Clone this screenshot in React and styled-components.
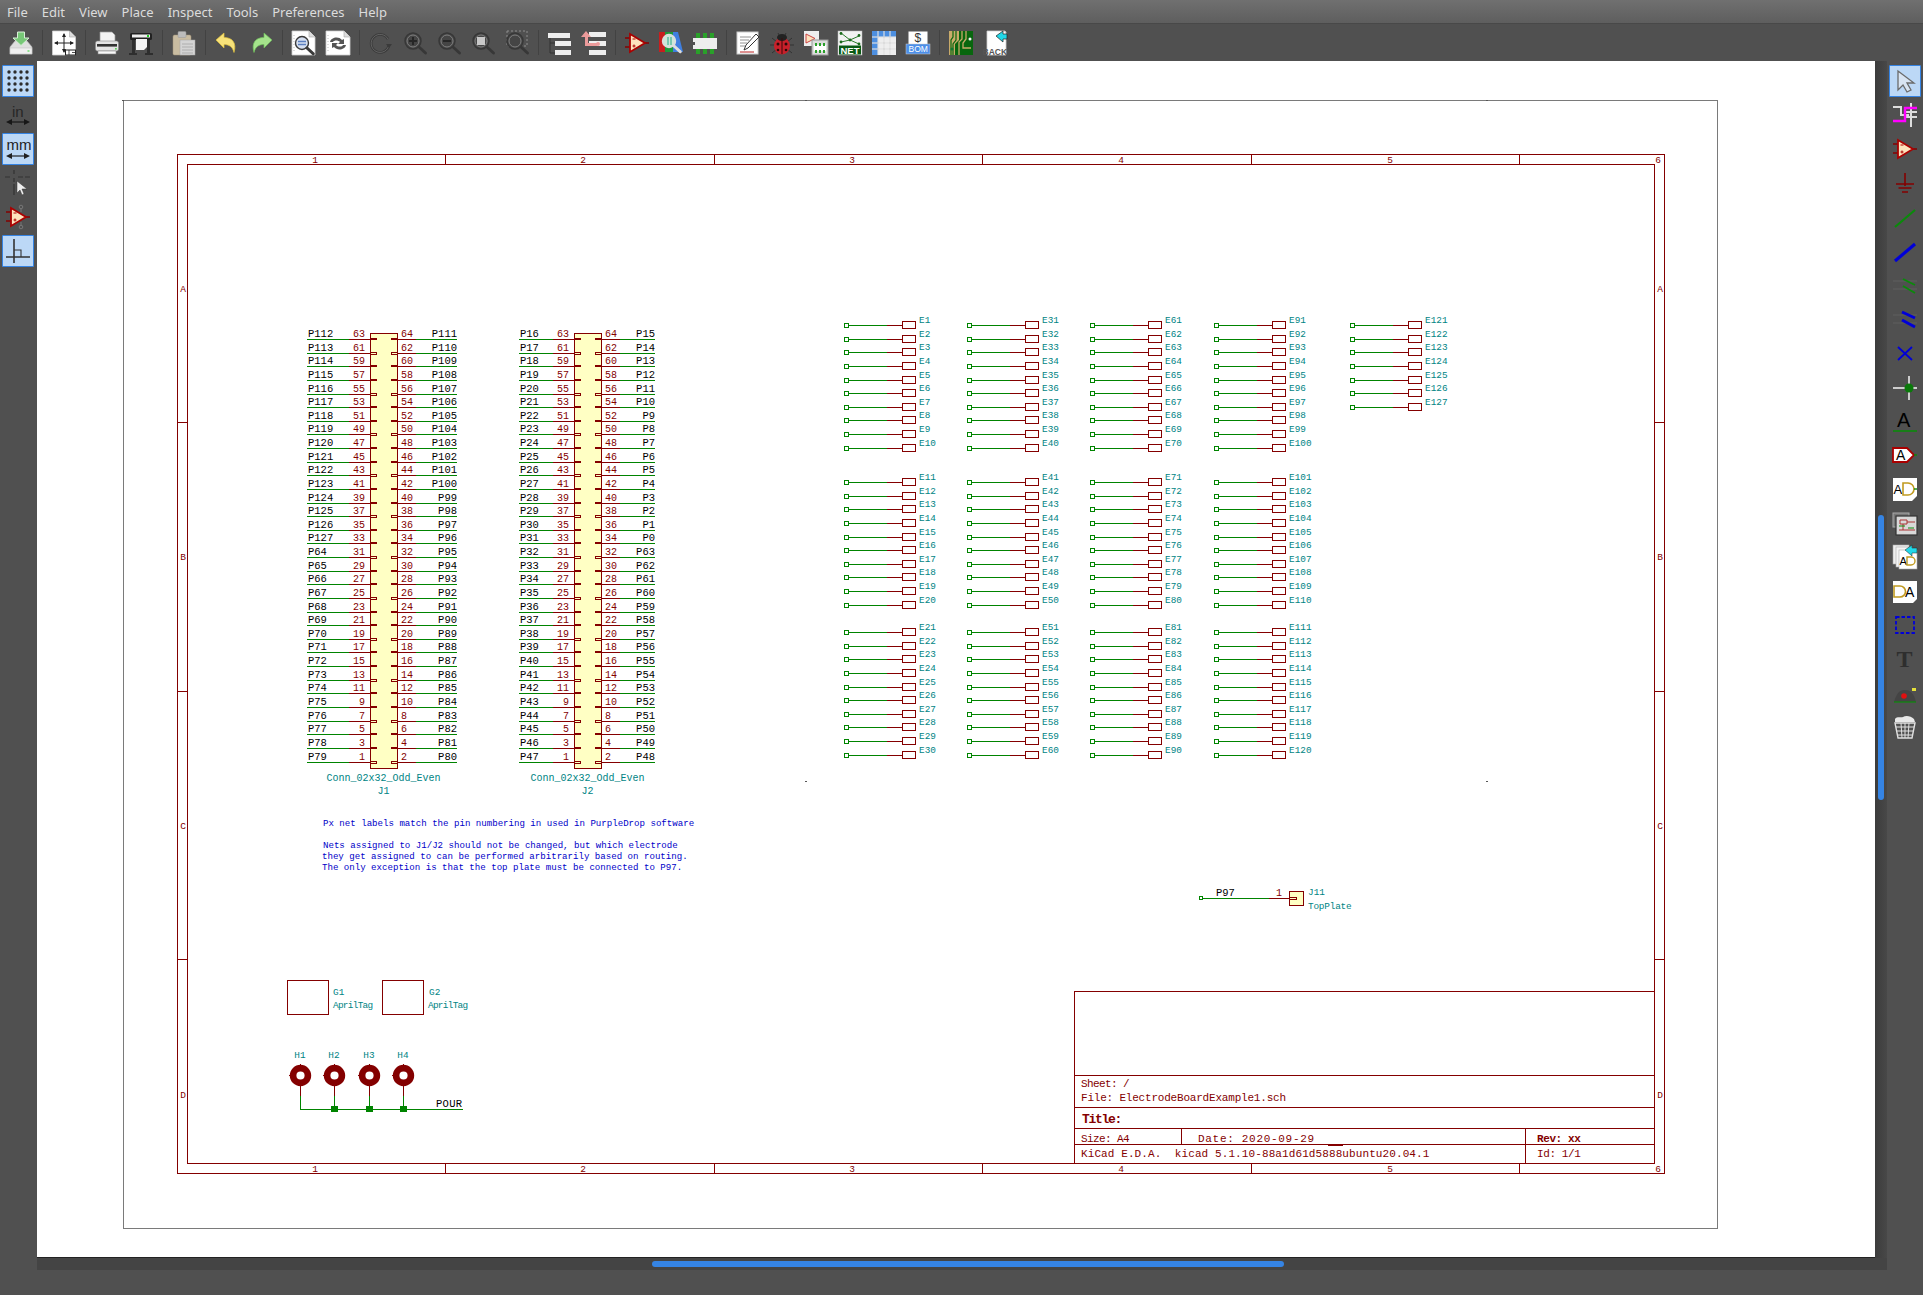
import React from 'react'
import styled, { createGlobalStyle } from 'styled-components'

const GlobalStyle = createGlobalStyle`
  html, body { margin: 0; padding: 0; background: #505050; }
`

const RED = '#840000'
const GREEN = '#008400'
const TEAL = '#008484'

// ---- window chrome ----
const Window = styled.div`
  width: 1923px;
  height: 1295px;
  display: flex;
  flex-direction: column;
  background: #505050;
  overflow: hidden;
  font-family: "Noto Sans", "Open Sans", sans-serif;
`
const MenuBar = styled.div`
  height: 23px;
  display: flex;
  align-items: center;
  gap: 14px;
  padding-left: 7px;
  background: linear-gradient(#707070, #5e5e5e);
  border-bottom: 1px solid #484848;
`
const MenuItem = styled.span`
  font-size: 13px;
  line-height: 20px;
  color: #dcdcdc;
`
const TopToolbar = styled.div`
  height: 37px;
  display: flex;
  align-items: center;
  padding-left: 4px;
  background: #505050;
`
const Sep = styled.span`
  width: 1px;
  height: 25px;
  margin: 0 4px;
  background: #424242;
`
const ToolButton = styled.div`
  width: ${p => p.$wide ? 34 : 32}px;
  height: ${p => p.$wide ? 34 : 32}px;
  box-sizing: border-box;
  flex: none;
  display: flex;
  align-items: center;
  justify-content: center;
  border-radius: 1px;
  border: 1px solid ${p => p.$active ? '#3584e4' : 'transparent'};
  background: ${p => p.$active ? '#bcd8f6' : 'transparent'};
`
const Main = styled.div`
  height: 1209px;
  display: flex;
`
const SideToolbar = styled.div`
  width: ${p => p.$w}px;
  flex: none;
  box-sizing: border-box;
  padding: 4px 2px 0;
  display: flex;
  flex-direction: column;
  gap: 2px;
`
const Center = styled.div`
  width: 1850px;
  display: flex;
  flex-direction: column;
`
const CanvasRow = styled.div`
  height: 1197px;
  display: flex;
`
const Sheet = styled.svg`
  display: block;
  width: 1838px;
  height: 1197px;
  background: #fff;
  border-bottom: 1px solid #222;
  box-sizing: border-box;
`
const VScroll = styled.div`
  width: 12px;
  background: linear-gradient(90deg, #3c3c3c, #484848);
  padding: 454px 3px 0;
  box-sizing: border-box;
`
const VThumb = styled.div`
  width: 6px;
  height: 285px;
  background: #3584e4;
  border-radius: 3px;
`
const HScroll = styled.div`
  height: 12px;
  background: #444;
  padding: 3px 0 0 615px;
  box-sizing: border-box;
`
const HThumb = styled.div`
  width: 632px;
  height: 6px;
  background: #3584e4;
  border-radius: 3px;
`
const BottomBar = styled.div`
  height: 25px;
  background: #505050;
`

// ---- icons ----
const Svg = styled.svg.attrs({ viewBox: '0 0 26 26' })`
  width: 26px;
  height: 26px;
  display: block;
  opacity: ${p => p.$dim || 1};
`
const IconLabel = styled.text`
  font-family: ${p => p.$serif ? '"Liberation Serif"' : '"Liberation Sans"'};
  font-size: ${p => p.$size}px;
  font-weight: ${p => p.$bold ? 700 : 400};
  fill: ${p => p.$fill || '#000'};
`

const Doc = ({ x = 4, y = 1, w = 18, h = 24, fold = 6 }) => (
  <g>
    <path d={`M${x} ${y}h${w - fold}l${fold} ${fold}v${h - fold}h-${w}z`} fill="#fff" stroke="#cfcfcf" strokeWidth=".8" />
    <path d={`M${x + w - fold} ${y}v${fold}h${fold}`} fill="#ddd" stroke="#aaa" strokeWidth=".6" />
  </g>
)
const MagGlass = ({ cx = 11, cy = 11, r = 7, stroke = '#444', fill = 'none' }) => (
  <g>
    <circle cx={cx} cy={cy} r={r} fill={fill} stroke={stroke} strokeWidth="1.4" />
    <path d={`M${cx + r * .75} ${cy + r * .75}l6.5 6`} stroke={stroke} strokeWidth="2.8" strokeLinecap="round" />
  </g>
)
const OpampGlyph = ({ pale }) => (
  <g>
    <path d="M1 8h5M1 17h5M21 13h4" stroke={pale ? '#e88' : RED} strokeWidth="1.4" />
    <path d="M6 4L21 13L6 22z" fill={pale ? '#fbdcc8' : '#fde3bd'} stroke={pale ? '#e88' : '#a00'} strokeWidth="1.8" />
    <path d="M8.5 9h3M8.5 16h3M10 14.500v3" stroke="#a00" strokeWidth="1" />
  </g>
)

const icons = {
  load: <Svg>
    <path d="M2 17L7 11H19L24 17V24H2z" fill="#dfdfdf" stroke="#bbb" strokeWidth=".6" />
    <rect x="2" y="18" width="22" height="6" fill="#efefef" stroke="#bbb" strokeWidth=".5" />
    <rect x="19.500" y="20" width="2" height="2" fill="#8fe08f" />
    <path d="M9.500 2h7v6h4.500L13 15.500L5 8h4.500z" fill="#78c878" stroke="#d8efd8" strokeWidth="1" />
  </Svg>,
  page: <Svg>
    <Doc x={1.500} y={1} w={23} h={24} />
    <path d="M13 4v18M4 13h18" stroke="#222" strokeWidth="1" />
    <path d="M13 3l-2 4h4zM13 23l-2-4h4zM3 13l4-2v4zM23 13l-4-2v4z" fill="#222" />
    <rect x="14.500" y="20" width="10" height="5" fill="#fff" stroke="#222" />
    <path d="M18 20v5M21 22.500h3" stroke="#222" strokeWidth=".8" />
  </Svg>,
  print: <Svg>
    <path d="M6 2h12l3 3v7H6z" fill="#f4f4f4" stroke="#999" strokeWidth=".7" />
    <rect x="1.500" y="11" width="23" height="10" rx="2" fill="#e4e4e4" stroke="#888" strokeWidth=".6" />
    <rect x="3" y="14" width="20" height="2.600" fill="#333" />
    <rect x="21" y="18" width="1.800" height="1.600" fill="#5fd05f" />
    <rect x="4" y="21" width="18" height="3" fill="#f8f8f8" stroke="#888" strokeWidth=".6" />
  </Svg>,
  plot: <Svg>
    <rect x="2" y="3" width="22" height="7" rx="1.500" fill="#222" />
    <rect x="4" y="4.500" width="18" height="3" fill="#eee" />
    <rect x="19" y="5" width="2" height="2" fill="#2c2" />
    <path d="M8 9h11v8l-3 3H8z" fill="#f4f4f4" />
    <path d="M4 10h3v13H4zM19 10h3v13h-3zM1 23h8v2H1zM17 23h8v2h-8z" fill="#2e2e2e" />
  </Svg>,
  paste: <Svg $dim=".8">
    <rect x="2" y="5" width="18" height="20" rx="1.500" fill="#e8d7b6" stroke="#b7a684" strokeWidth=".5" />
    <rect x="7" y="1.500" width="8" height="6" rx="1" fill="#d8d8d8" stroke="#aaa" strokeWidth=".5" />
    <rect x="9" y="10" width="15" height="15" fill="#f5f5f5" stroke="#bbb" strokeWidth=".5" />
    <path d="M11 14h11M11 17h11M11 20h11M11 23h11" stroke="#bbb" strokeWidth=".8" />
  </Svg>,
  undo: <Svg>
    <path d="M2 10L10 3v4.500c8 0 13 5 10 15-1.500-6-5-8-10-8V18z" fill="#f7e27a" stroke="#e0c13c" strokeWidth=".7" />
  </Svg>,
  redo: <Svg>
    <path d="M24 10L16 3v4.500c-8 0-13 5-10 15 1.500-6 5-8 10-8V18z" fill="#a5e38c" stroke="#6ec05a" strokeWidth=".7" />
  </Svg>,
  find: <Svg>
    <Doc x={1} y={1} w={23} h={24} />
    <path d="M3 5v16" stroke="#bbb" strokeDasharray="1 2" />
    <MagGlass cx={11} cy={13} r={6.500} stroke="#3a3a3a" fill="#d5dff0" />
    <path d="M7 11.500h8M7 14.500h8" stroke="#5b7fc0" strokeWidth="1.400" />
  </Svg>,
  replace: <Svg>
    <Doc x={1} y={1} w={24} h={24} />
    <path d="M3 5v16" stroke="#bbb" strokeDasharray="1 2" />
    <path d="M5 12c1-5 9-6 12-2l2-1v5h-6l2-2c-2-2-6-2-7 0zM21 15c-1 5-9 6-12 2l-2 1v-5h6l-2 2c2 2 6 2 7 0z" fill="#555" />
  </Svg>,
  refresh: <Svg $dim=".75">
    <path d="M20 9a9 9 0 1 0 1 6" fill="none" stroke="#333" strokeWidth="2.600" />
    <path d="M20 9a9 9 0 1 0 1 6" fill="none" stroke="#777" strokeWidth=".8" />
    <path d="M18 14h6l-3 4z" fill="#333" />
  </Svg>,
  zoomIn: <Svg $dim=".85"><MagGlass cx={11} cy={11} r={8} stroke="#333" fill="#444" /><circle cx="11" cy="11" r="6" fill="none" stroke="#888" /><path d="M7 11h8M11 7v8" stroke="#1f1f1f" strokeWidth="2" /></Svg>,
  zoomOut: <Svg $dim=".85"><MagGlass cx={11} cy={11} r={8} stroke="#333" fill="#444" /><circle cx="11" cy="11" r="6" fill="none" stroke="#888" /><path d="M7 11h8" stroke="#1f1f1f" strokeWidth="2" /></Svg>,
  zoomFit: <Svg $dim=".85"><MagGlass cx={11} cy={11} r={8} stroke="#333" fill="#444" /><circle cx="11" cy="11" r="6" fill="none" stroke="#888" /><rect x="7" y="7" width="8" height="8" fill="#ddd" /></Svg>,
  zoomSel: <Svg $dim=".85"><rect x="3" y="1" width="20" height="15" fill="none" stroke="#999" strokeDasharray="2 2" /><MagGlass cx={11} cy={11} r={8} stroke="#333" fill="#444" /><circle cx="11" cy="11" r="6" fill="none" stroke="#888" /></Svg>,
  tree: <Svg>
    <path d="M3 8v15M3 13h5M3 23h5" stroke="#333" strokeWidth="1" />
    <rect x="1" y="3" width="22" height="5" fill="#eee" />
    <rect x="8" y="11" width="16" height="5" fill="#eee" />
    <rect x="8" y="20" width="16" height="5" fill="#eee" />
  </Svg>,
  leave: <Svg>
    <rect x="8" y="2" width="17" height="5" fill="#eee" />
    <rect x="8" y="11" width="17" height="5" fill="#eee" />
    <rect x="8" y="20" width="17" height="5" fill="#eee" />
    <path d="M5 1l5 6H7v6h9v3H4V7H0z" fill="#eb9a9a" />
    <circle cx="17" cy="14" r="2" fill="#eb9a9a" />
  </Svg>,
  symbol: <Svg><OpampGlyph /></Svg>,
  libBrowse: <Svg>
    <rect x="1" y="2" width="6" height="20" fill="#c81e1e" />
    <rect x="7" y="2" width="8" height="20" fill="#1d9a3a" />
    <path d="M15 2h5l5 20h-10z" fill="#3f7fe0" />
    <MagGlass cx={11} cy={11} r={6.500} stroke="#ddd" fill="#cfe6d8" />
    <path d="M10 7v8M13 7v8" stroke="#2a8" />
  </Svg>,
  footprint: <Svg>
    <rect x="1" y="8" width="24" height="11" fill="#eee" />
    <path d="M1 12h2v3H1z" fill="#505050" />
    <path d="M4 3h4v5H4zM11 3h4v5h-4zM18 3h4v5h-4zM4 19h4v5H4zM11 19h4v5h-4zM18 19h4v5h-4z" fill="#2aa02a" />
  </Svg>,
  annotate: <Svg>
    <rect x="2" y="2" width="21" height="22" fill="#fff" stroke="#ccc" />
    <path d="M5 7h11M5 10h9M5 13h7M5 16h5" stroke="#777" strokeWidth=".8" />
    <path d="M5 22h14" stroke="#b22" strokeWidth="1" />
    <path d="M9 20l2-5L21 4l3 3L13 18z" fill="#fff" stroke="#333" strokeWidth="1" />
  </Svg>,
  bug: <Svg>
    <path d="M3 8l5 4M23 8l-5 4M1 15h6M25 15h-6M3 23l5-4M23 23l-5-4M9 3l2 4M17 3l-2 4" stroke="#333" strokeWidth="1" />
    <ellipse cx="13" cy="16" rx="8" ry="8.500" fill="#c8202a" />
    <ellipse cx="13" cy="7.500" rx="5" ry="3.500" fill="#222" />
    <path d="M13 8v16" stroke="#3a0a0a" strokeWidth="1" />
    <circle cx="9" cy="14" r="1.500" fill="#2a0a0a" /><circle cx="17" cy="14" r="1.500" fill="#2a0a0a" />
    <circle cx="9" cy="20" r="1.300" fill="#2a0a0a" /><circle cx="17" cy="20" r="1.300" fill="#2a0a0a" />
  </Svg>,
  cvpcb: <Svg>
    <rect x="1" y="1" width="15" height="15" fill="#eee" />
    <path d="M3 4L12 8.500L3 13z" fill="#fde3bd" stroke="#c44" />
    <rect x="9" y="10" width="16" height="15" fill="#ddd" stroke="#999" />
    <rect x="11" y="15" width="12" height="6" fill="#fff" />
    <path d="M12 13h2v3h-2zM16 13h2v3h-2zM20 13h2v3h-2zM12 20h2v3h-2zM16 20h2v3h-2zM20 20h2v3h-2z" fill="#2aa02a" />
  </Svg>,
  net: <Svg>
    <rect x="1" y="1" width="24" height="24" fill="#f2f2f2" stroke="#bbb" strokeWidth=".5" />
    <path d="M4 3l9 7 9-4M4 12l9-2 9 4" stroke="#2a7a2a" strokeWidth="1" fill="none" />
    <circle cx="4" cy="3.500" r="1.400" fill="#1a6a1a" /><circle cx="22" cy="5.500" r="1.400" fill="#1a6a1a" />
    <circle cx="13" cy="10" r="1.400" fill="#1a6a1a" /><circle cx="4" cy="12" r="1.400" fill="#1a6a1a" /><circle cx="22" cy="14" r="1.400" fill="#1a6a1a" />
    <rect x="2" y="15.500" width="22" height="9" fill="#0a5a14" />
    <IconLabel x="3.500" y="23.500" $size={9.500} $bold $fill="#fff">NET</IconLabel>
  </Svg>,
  table: <Svg>
    <rect x="1" y="1" width="24" height="24" fill="#eee" />
    <rect x="1" y="1" width="24" height="6" fill="#4d8fe0" />
    <rect x="1" y="1" width="6" height="24" fill="#4d8fe0" />
    <path d="M1 7h24M1 13h24M1 19h24M7 1v24M13 1v24M19 1v24" stroke="#fff" strokeWidth="1" />
    <path d="M1 7h24M1 13h24M1 19h24M7 1v24M13 1v24M19 1v24" stroke="#888" strokeWidth=".3" />
  </Svg>,
  bom: <Svg>
    <rect x="3" y="1" width="20" height="14" fill="#fff" stroke="#555" />
    <IconLabel x="9.500" y="12" $size={12} $fill="#333">$</IconLabel>
    <rect x="1" y="14" width="24" height="10" fill="#4d8fe8" stroke="#ccc" strokeWidth=".5" />
    <IconLabel x="3.500" y="22" $size={8.500} $fill="#fff">BOM</IconLabel>
  </Svg>,
  pcb: <Svg>
    <rect x="1" y="1" width="24" height="24" fill="#08660e" />
    <path d="M1 1h10v9L7 14v11H1z" fill="#c8aa6a" />
    <path d="M5 1v6L3 10v15M8 1v9L5 14v11" stroke="#08660e" strokeWidth="1.200" fill="none" />
    <path d="M14 1v8l-3 3v13M18 1v8l-3 4v5h8" stroke="#c8aa6a" strokeWidth="1.300" fill="none" />
    <circle cx="22" cy="9" r="1.500" fill="#f4f4f4" /><circle cx="4" cy="19" r="1.500" fill="#173" />
  </Svg>,
  back: <Svg>
    <Doc x={5} y={1} w={19} h={24} fold={1} />
    <path d="M14 6l7-5v3h4v5h-4v3z" fill="#22d8e8" stroke="#222" strokeWidth=".7" />
    <IconLabel x=".500" y="24.500" $size={8.500} $bold $fill="#555">BACK</IconLabel>
  </Svg>,
  grid: <Svg>
    {[4, 10, 16, 22].flatMap(y => [4, 10, 16, 22].map(x => <circle key={x + '-' + y} cx={x} cy={y} r="1.700" fill="#2c2c2c" />))}
  </Svg>,
  inch: <Svg $dim=".9">
    <IconLabel x="7" y="15" $size={15} $fill="#222">in</IconLabel>
    <path d="M3 20h20" stroke="#111" strokeWidth="1.200" /><path d="M1 20l6-3v6zM25 20l-6-3v6z" fill="#111" />
  </Svg>,
  mm: <Svg>
    <IconLabel x="1.500" y="14" $size={15} $fill="#222">mm</IconLabel>
    <path d="M3 20h20" stroke="#222" strokeWidth="1.200" /><path d="M1 20l6-3v6zM25 20l-6-3v6z" fill="#222" />
  </Svg>,
  cursor: <Svg>
    <path d="M9 0v4M9 8v4M9 14v11M0 7h5M13 7h5M20 7h5" stroke="#333" strokeWidth="1.200" />
    <path d="M12 11v12l3-3 2 5 2-1-2-5h5z" fill="#eee" stroke="#333" strokeWidth=".5" />
  </Svg>,
  opampPins: <Svg>
    <path d="M16 4v4M16 18v4" stroke="#777" strokeWidth="1" />
    <circle cx="16" cy="3" r="1.800" fill="none" stroke="#777" /><circle cx="16" cy="23" r="1.800" fill="none" stroke="#777" />
    <OpampGlyph />
  </Svg>,
  cartesian: <Svg>
    <path d="M9 1v24M1 19h24" stroke="#333" strokeWidth="1.600" />
    <path d="M9 12h7v7" stroke="#333" strokeWidth="1.100" fill="none" />
  </Svg>,
  select: <Svg><path d="M6 3v19l5-5 4 7 4-2-4-7h7z" fill="#d8e4f2" stroke="#6a6a6a" strokeWidth="1.300" /></Svg>,
  highlight: <Svg>
    <path d="M1 5h8v8h8M19 1v24M14 10h11M14 15h11" stroke="#ddd" strokeWidth="2" fill="none" />
    <path d="M1 19h12V6h12" stroke="#f0f" strokeWidth="2.400" fill="none" />
  </Svg>,
  ground: <Svg>
    <path d="M13 3v13" stroke={RED} strokeWidth="1.600" />
    <path d="M4 14h18M6.500 18h13M10 22h6" stroke={RED} strokeWidth="1.600" />
  </Svg>,
  wire: <Svg><path d="M3 23L23 6" stroke="#0a8a0a" strokeWidth="2.200" /></Svg>,
  bus: <Svg><path d="M3 23L23 6" stroke="#0000d8" strokeWidth="3.200" /></Svg>,
  wireEntry: <Svg>
    <path d="M1 9h24" stroke="#5a5a5a" strokeWidth="1.500" /><path d="M1 17h24" stroke="#5a5a5a" strokeWidth="1.500" />
    <path d="M11 7l12 6M11 14l12 7" stroke="#0a8a0a" strokeWidth="1.800" />
  </Svg>,
  busEntry: <Svg>
    <path d="M1 9h24" stroke="#5a5a5a" strokeWidth="1.500" /><path d="M1 17h24" stroke="#5a5a5a" strokeWidth="1.500" />
    <path d="M10 6l13 6M10 14l13 7" stroke="#0000d8" strokeWidth="3" />
  </Svg>,
  noConn: <Svg><path d="M6 7l14 13M20 7L6 20" stroke="#0000d8" strokeWidth="1.800" /></Svg>,
  junction: <Svg>
    <path d="M1 14h24M17 2v24" stroke="#ccc" strokeWidth="2" />
    <circle cx="17" cy="14" r="4.500" fill="#0a7a0a" />
  </Svg>,
  label: <Svg>
    <IconLabel x="5" y="19" $size={20} $fill="#000">A</IconLabel>
    <path d="M1 23h24" stroke="#0a8a0a" strokeWidth="1.600" />
  </Svg>,
  globalLabel: <Svg>
    <path d="M1 6h14l7 7-7 7H1z" fill="#fff" stroke="#a00" strokeWidth="1.800" />
    <IconLabel x="4" y="18" $size={14} $fill="#000">A</IconLabel>
    <path d="M22 13h3" stroke="#0a8a0a" strokeWidth="1.400" />
  </Svg>,
  hierLabel: <Svg>
    <path d="M1 2h24v18l-5 5H1z" fill="#fff" />
    <IconLabel x="1.500" y="18" $size={13} $fill="#000">A</IconLabel>
    <path d="M11 7h5a6 6 0 0 1 0 12h-5z" fill="none" stroke="#c09a20" strokeWidth="1.600" />
    <path d="M22 13h3" stroke="#0a8a0a" strokeWidth="1.400" />
  </Svg>,
  hierSheet: <Svg>
    <rect x="1" y="3" width="16" height="14" fill="#777" stroke="#aaa" />
    <rect x="4" y="6" width="21" height="19" fill="#d8d8d8" stroke="#333" strokeWidth="1.200" />
    <path d="M8 10h7v4h-7zM15 12h8M11 14v6M7 20h16" stroke="#a33" strokeWidth="1" fill="none" />
    <path d="M7 16h6M16 18h6" stroke="#0a8a0a" strokeWidth="1" />
  </Svg>,
  importSheet: <Svg>
    <rect x="1" y="1" width="16" height="19" fill="#eee" stroke="#aaa" strokeWidth=".6" />
    <rect x="4" y="3" width="16" height="20" fill="#f4f4f4" stroke="#aaa" strokeWidth=".6" />
    <rect x="7" y="6" width="18" height="19" fill="#fff" stroke="#aaa" strokeWidth=".6" />
    <IconLabel x="7.500" y="21" $size={11} $fill="#000">A</IconLabel>
    <path d="M15 13h4a4 4 0 0 1 0 8h-4z" fill="none" stroke="#c09a20" strokeWidth="1.400" />
    <path d="M13 6l7-5v3h5v5h-5v3z" fill="#22d8e8" stroke="#222" strokeWidth=".5" />
  </Svg>,
  pinSheet: <Svg>
    <path d="M1 3h24v18l-4 4H1z" fill="#fff" />
    <path d="M2 8h6a5.500 5.500 0 0 1 0 11H2z" fill="none" stroke="#c09a20" strokeWidth="1.600" />
    <IconLabel x="13" y="19" $size={14} $fill="#000">A</IconLabel>
  </Svg>,
  dashRect: <Svg><rect x="4" y="5" width="18" height="16" fill="none" stroke="#0000d8" strokeWidth="1.800" strokeDasharray="3.500 2" /></Svg>,
  textTool: <Svg><IconLabel x="4.500" y="21" $size={24} $bold $serif $fill="#2e2e2e">T</IconLabel></Svg>,
  bitmap: <Svg>
    <path d="M2 22c3-10 6-12 11-12s9 3 11 12z" fill="#444" />
    <path d="M2 22h22" stroke="#0a8a0a" strokeWidth="1.200" />
    <circle cx="12" cy="16" r="2.800" fill="#e01010" />
    <rect x="20" y="8" width="4" height="3" fill="#e6e23a" />
  </Svg>,
  trash: <Svg>
    <path d="M3 5c2-3 6-1 8-2 3-2 8-1 11 2l1 3H3z" fill="#e8e8e8" />
    <path d="M3 9h20l-3 15H6z" fill="none" stroke="#e0e0e0" strokeWidth="1.400" />
    <path d="M9 9l1 15M13 9v15M17 9l-1 15M4 13h18M5 17h16M6 21h14" stroke="#e0e0e0" strokeWidth="1" />
  </Svg>,
}

// ---- schematic parts ----
const Line = styled.line`
  stroke: ${p => p.$c};
  stroke-width: 1;
  shape-rendering: crispEdges;
`
const Box = styled.rect`
  stroke: ${p => p.$c || RED};
  stroke-width: ${p => p.$sw || 1};
  fill: ${p => p.$fill || 'none'};
  shape-rendering: crispEdges;
`
const SchText = styled.text`
  font-family: "Liberation Mono", monospace;
  font-size: ${p => p.$size || 10}px;
  letter-spacing: ${p => p.$ls || 0}px;
  font-weight: ${p => p.$bold ? 700 : 400};
  fill: ${p => p.$c || '#000'};
  white-space: pre;
`

const px = v => Math.round(v) + .5
const PITCH = 13.63

const range = (from, n, step = 1) => Array.from({ length: n }, (_, i) => from + i * step)

const Connector = ({ x, wireL, wireR, leftNets, rightNets, labelL, value, refName }) => {
  const w = 27
  const rows = range(0, 32)
  return (
    <g>
      <Box x={px(x)} y={333} width={w} height={435} $fill="#ffffc4" as="rect" />
      {rows.map(i => {
        const y = px(339 + i * PITCH)
        const odd = 63 - i * 2
        const hollow = i % 3 === 1
        return (
          <g key={i}>
            <Line x1={wireL} x2={x - 21} y1={y} y2={y} $c={GREEN} />
            <Line x1={x - 21} x2={x} y1={y} y2={y} $c={RED} />
            <Line x1={x + w + .5} x2={x + w + 19} y1={y} y2={y} $c={RED} />
            <Line x1={x + w + 19} x2={wireR} y1={y} y2={y} $c={GREEN} />
            <Box x={px(x)} y={y - 1} width={6} height={hollow ? 2 : 1} $fill={hollow ? '#ffffc4' : RED} />
            <Box x={px(x) + w - 6} y={y - 1} width={6} height={hollow ? 2 : 1} $fill={hollow ? '#ffffc4' : RED} />
            <SchText x={labelL} y={y - 3} $size={10.500}>{leftNets[i]}</SchText>
            <SchText x={wireR} y={y - 3} $size={10.500} textAnchor="end">{rightNets[i]}</SchText>
            <SchText x={x - 5} y={y - 3} $c={RED} textAnchor="end">{odd}</SchText>
            <SchText x={x + w + 4} y={y - 3} $c={RED}>{odd + 1}</SchText>
          </g>
        )
      })}
      <SchText x={x + w / 2} y={781} $c={TEAL} textAnchor="middle">{value}</SchText>
      <SchText x={x + w / 2} y={794} $c={TEAL} textAnchor="middle">{refName}</SchText>
    </g>
  )
}

const Electrode = ({ x, y, n }) => {
  const yy = px(y)
  return (
    <g>
      <Box x={px(x)} y={yy - 2} width={4} height={4} $c={GREEN} />
      <Line x1={x + 5} x2={x + 43} y1={yy} y2={yy} $c={GREEN} />
      <Line x1={x + 43} x2={x + 58} y1={yy} y2={yy} $c={RED} />
      <Box x={px(x + 58)} y={yy - 4} width={13} height={7} />
      <SchText x={x + 75} y={yy - 3} $size={9.400} $c={TEAL}>E{n}</SchText>
    </g>
  )
}

const COLUMNS = [844, 967, 1090, 1214, 1350]
const GROUPS = [325, 482, 632]

const Electrodes = () => {
  const items = []
  COLUMNS.forEach((x, c) => {
    if (c === 4) {
      range(0, 7).forEach(i => items.push({ x, y: GROUPS[0] + i * PITCH, n: 121 + i }))
      return
    }
    GROUPS.forEach((g, gi) => range(0, 10).forEach(i => {
      const n = c < 3 ? c * 30 + gi * 10 + i + 1 : 91 + gi * 10 + i
      items.push({ x, y: g + i * PITCH, n })
    }))
  })
  return items.map(e => <Electrode key={e.n} {...e} />)
}

const FrameMarks = () => {
  const xTicks = [445, 714, 982, 1251, 1519]
  const yTicks = [422, 691, 959]
  const xLabels = [315, 583, 852, 1121, 1390, 1658]
  const yLabels = ['A', 'B', 'C', 'D']
  const yCenters = [292, 560, 829, 1098]
  return (
    <g>
      <Box x={177.500} y={154.500} width={1487} height={1019} />
      <Box x={187.500} y={164.500} width={1467} height={999} />
      {xTicks.map(x => (
        <g key={x}>
          <Line x1={x + .5} x2={x + .5} y1={155} y2={165} $c={RED} />
          <Line x1={x + .5} x2={x + .5} y1={1164} y2={1174} $c={RED} />
        </g>
      ))}
      {yTicks.map(y => (
        <g key={y}>
          <Line y1={y + .5} y2={y + .5} x1={178} x2={188} $c={RED} />
          <Line y1={y + .5} y2={y + .5} x1={1655} x2={1665} $c={RED} />
        </g>
      ))}
      {xLabels.map((x, i) => (
        <g key={x}>
          <SchText x={x} y={163} $size={9.500} $c={RED} textAnchor="middle">{i + 1}</SchText>
          <SchText x={x} y={1172} $size={9.500} $c={RED} textAnchor="middle">{i + 1}</SchText>
        </g>
      ))}
      {yLabels.map((l, i) => (
        <g key={l}>
          <SchText x={183} y={yCenters[i]} $size={9.500} $c={RED} textAnchor="middle">{l}</SchText>
          <SchText x={1660} y={yCenters[i]} $size={9.500} $c={RED} textAnchor="middle">{l}</SchText>
        </g>
      ))}
    </g>
  )
}

const TitleBlock = () => (
  <g>
    <Line x1={1074.500} x2={1074.500} y1={991} y2={1164} $c={RED} />
    {[991, 1075, 1107, 1128, 1144].map(y => <Line key={y} x1={1074} x2={1654} y1={y + .5} y2={y + .5} $c={RED} />)}
    <Line x1={1181.500} x2={1181.500} y1={1128} y2={1144} $c={RED} />
    <Line x1={1525.500} x2={1525.500} y1={1128} y2={1164} $c={RED} />
    <Line x1={1328} x2={1343} y1={1145.500} y2={1145.500} $c={RED} />
    <SchText x={1081} y={1087} $size={11} $ls={-.6} $c={RED}>Sheet: /</SchText>
    <SchText x={1081} y={1101} $size={11} $ls={-.2} $c={RED}>File: ElectrodeBoardExample1.sch</SchText>
    <SchText x={1082} y={1123} $size={13} $ls={-1.300} $bold $c={RED}>Title:</SchText>
    <SchText x={1081} y={1142} $size={11} $ls={-.6} $c={RED}>Size: A4</SchText>
    <SchText x={1198} y={1142} $size={11} $ls={.7} $c={RED}>Date: 2020-09-29</SchText>
    <SchText x={1537} y={1142} $size={11} $ls={-.4} $bold $c={RED}>Rev: xx</SchText>
    <SchText x={1081} y={1157} $size={11} $ls={.1} $c={RED}>KiCad E.D.A.  kicad 5.1.10-88a1d61d5888ubuntu20.04.1</SchText>
    <SchText x={1537} y={1157} $size={11} $ls={-.4} $c={RED}>Id: 1/1</SchText>
  </g>
)

const Notes = () => (
  <g>
    <SchText x={323} y={826} $size={9.100} $c="#0000c8">Px net labels match the pin numbering in used in PurpleDrop software</SchText>
    <SchText x={323} y={848} $size={9.100} $c="#0000c8">Nets assigned to J1/J2 should not be changed, but which electrode</SchText>
    <SchText x={322} y={859} $size={9.100} $c="#0000c8">they get assigned to can be performed arbitrarily based on routing.</SchText>
    <SchText x={322} y={870} $size={9.100} $c="#0000c8">The only exception is that the top plate must be connected to P97.</SchText>
  </g>
)

const TopPlate = () => (
  <g>
    <Box x={1199.500} y={896.500} width={3} height={3} $c={GREEN} />
    <Line x1={1203} x2={1269} y1={898.500} y2={898.500} $c={GREEN} />
    <Line x1={1269} x2={1289} y1={898.500} y2={898.500} $c={RED} />
    <Box x={1289.500} y={891.500} width={14} height={14} $fill="#ffffc4" />
    <Box x={1289.500} y={897.500} width={7} height={2} $fill="#ffffc4" />
    <SchText x={1279} y={896} $c={RED} textAnchor="middle">1</SchText>
    <SchText x={1216} y={896} $size={10.500}>P97</SchText>
    <SchText x={1308} y={895} $size={9.400} $c={TEAL}>J11</SchText>
    <SchText x={1308} y={909} $size={9.400} $ls={-.2} $c={TEAL}>TopPlate</SchText>
  </g>
)

const AprilTags = () => (
  <g>
    <Box x={287.500} y={980.500} width={41} height={34} />
    <Box x={382.500} y={980.500} width={41} height={34} />
    <SchText x={333} y={995} $size={9.400} $c={TEAL}>G1</SchText>
    <SchText x={333} y={1008} $size={9.400} $ls={-.7} $c={TEAL}>AprilTag</SchText>
    <SchText x={429} y={995} $size={9.400} $c={TEAL}>G2</SchText>
    <SchText x={428} y={1008} $size={9.400} $ls={-.7} $c={TEAL}>AprilTag</SchText>
  </g>
)

const HOLES = [300, 334, 369, 403]
const MountingHoles = () => (
  <g>
    {HOLES.map((x, i) => (
      <g key={x}>
        <SchText x={x} y={1058} $size={9.400} $c={TEAL} textAnchor="middle">H{i + 1}</SchText>
        <circle cx={x + .5} cy={1075.500} r={7.400} fill="none" stroke={RED} strokeWidth={6.600} />
        <Line x1={x - 11} x2={x - 9} y1={1075.500} y2={1075.500} $c={RED} />
        <Line x1={x + .5} x2={x + .5} y1={1064} y2={1066} $c={RED} />
        <Line x1={x + .5} x2={x + .5} y1={1086} y2={1096} $c={RED} />
        <Line x1={x + .5} x2={x + .5} y1={1096} y2={1109} $c={GREEN} />
        {i > 0 && <Box x={x - 2.500} y={1106.500} width={6} height={5} $c={GREEN} $fill={GREEN} />}
      </g>
    ))}
    <Line x1={300} x2={463} y1={1109.500} y2={1109.500} $c={GREEN} />
    <SchText x={436} y={1107} $size={10.500} $ls={.3}>POUR</SchText>
  </g>
)

const SheetMarks = () => (
  <g>
    <Box x={123.500} y={100.500} width={1594} height={1128} $c="#7a7a7a" />
    {[[806, 100], [1487, 100], [806, 781], [1487, 781], [123, 100]].map(([x, y]) => (
      <Line key={x + '-' + y} x1={x - 1} x2={x + 1} y1={y + .5} y2={y + .5} $c="#555" />
    ))}
  </g>
)

// ---- toolbars data ----
const MENUS = ['File', 'Edit', 'View', 'Place', 'Inspect', 'Tools', 'Preferences', 'Help']
const TOP_TOOLS = [
  ['load'], ['page'], ['print', 'plot'], ['paste'], ['undo', 'redo'], ['find', 'replace'],
  ['refresh', 'zoomIn', 'zoomOut', 'zoomFit', 'zoomSel'], ['tree', 'leave'],
  ['symbol', 'libBrowse', 'footprint'], ['annotate', 'bug', 'cvpcb', 'net', 'table', 'bom'], ['pcb', 'back'],
]
const LEFT_TOOLS = [
  ['grid', true], ['inch', false], ['mm', true], ['cursor', false], ['opampPins', false], ['cartesian', true],
]
const RIGHT_TOOLS = [
  'select', 'highlight', 'symbol', 'ground', 'wire', 'bus', 'wireEntry', 'busEntry', 'noConn', 'junction',
  'label', 'globalLabel', 'hierLabel', 'hierSheet', 'importSheet', 'pinSheet', 'dashRect', 'textTool', 'bitmap', 'trash',
]

const J1_LEFT = [...range(112, 16), ...range(64, 16)].map(n => 'P' + n)
const J1_RIGHT = range(111, 32, -1).map(n => 'P' + n)
const J2_LEFT = range(16, 32).map(n => 'P' + n)
const J2_RIGHT = [...range(15, 16, -1), ...range(63, 16, -1)].map(n => 'P' + n)

export default function App() {
  return (
    <Window>
      <GlobalStyle />
      <MenuBar>
        {MENUS.map(m => <MenuItem key={m}>{m}</MenuItem>)}
      </MenuBar>
      <TopToolbar>
        {TOP_TOOLS.map((group, g) => (
          <React.Fragment key={g}>
            {g > 0 && <Sep />}
            {group.map(name => <ToolButton $wide key={name}>{icons[name]}</ToolButton>)}
          </React.Fragment>
        ))}
      </TopToolbar>
      <Main>
        <SideToolbar $w={37}>
          {LEFT_TOOLS.map(([name, active]) => <ToolButton key={name} $active={active}>{icons[name]}</ToolButton>)}
        </SideToolbar>
        <Center>
          <CanvasRow>
            <Sheet viewBox="37 61 1838 1196">
              <SheetMarks />
              <FrameMarks />
              <TitleBlock />
              <Connector x={370} wireL={307} wireR={457} labelL={308} leftNets={J1_LEFT} rightNets={J1_RIGHT} value="Conn_02x32_Odd_Even" refName="J1" />
              <Connector x={574} wireL={519} wireR={655} labelL={520} leftNets={J2_LEFT} rightNets={J2_RIGHT} value="Conn_02x32_Odd_Even" refName="J2" />
              <Electrodes />
              <Notes />
              <TopPlate />
              <AprilTags />
              <MountingHoles />
            </Sheet>
            <VScroll><VThumb /></VScroll>
          </CanvasRow>
          <HScroll><HThumb /></HScroll>
        </Center>
        <SideToolbar $w={36}>
          {RIGHT_TOOLS.map((name, i) => <ToolButton key={name + i} $active={i === 0}>{icons[name]}</ToolButton>)}
        </SideToolbar>
      </Main>
      <BottomBar />
    </Window>
  )
}
